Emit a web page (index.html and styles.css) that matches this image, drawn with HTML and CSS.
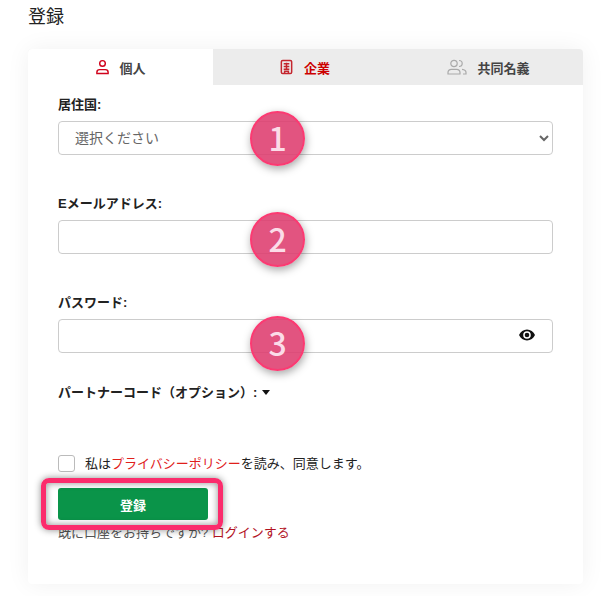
FILE: index.html
```html
<!DOCTYPE html>
<html lang="ja">
<head>
    <meta charset="UTF-8">
    <title>登録</title>
    <link rel="stylesheet" href="styles.css">
</head>
<body>
    <h1 class="page-title">登録</h1>

    <div class="card">
        <!-- tabs -->
        <div class="tabs">
            <div class="tab active">
                <svg class="tab-icon" viewBox="0 0 16 16" fill="none" stroke="#d0021b" stroke-width="1.5">
                    <circle cx="8" cy="4.2" r="3"/>
                    <path d="M2 15v-1.500c0-1.600 1.300-2.700 3-2.700h6c1.700 0 3 1.100 3 2.700V15z"/>
                </svg>
                <span>個人</span>
            </div>
            <div class="tab corp">
                <svg class="tab-icon" viewBox="0 0 16 16" fill="none" stroke="#c4262e" stroke-width="1.600">
                    <rect x="2.500" y="1" width="11" height="14" rx="1.500"/>
                    <path d="M5 4.500h6M5 7.500h6M5 10.500h6M8 3.500v7M6 15v-2.500h4V15"/>
                </svg>
                <span>企業</span>
            </div>
            <div class="tab joint">
                <svg class="tab-icon wide" viewBox="0 0 20 16" fill="none" stroke="#aaa" stroke-width="1.200">
                    <circle cx="7" cy="4.500" r="3.200"/>
                    <path d="M1 15v-1.500c0-2 1.500-3.200 3.500-3.200h5c2 0 3.500 1.200 3.500 3.200V15zM12 1.500c2 0 3.200 1.300 3.200 3s-1.200 3-3.200 3M15 10.300c2.200.2 4 1.300 4 3.200V15h-3"/>
                </svg>
                <span>共同名義</span>
            </div>
        </div>

        <!-- form -->
        <form class="form">
            <div class="field field-country">
                <label for="country">居住国:</label>
                <select id="country" class="input">
                    <option>選択ください</option>
                </select>
            </div>
            <div class="field field-email">
                <label for="email">Eメールアドレス:</label>
                <input type="text" id="email" class="input">
            </div>
            <div class="field field-password">
                <label for="password">パスワード:</label>
                <div class="password-box">
                    <input type="password" id="password" class="input">
                    <svg class="eye" viewBox="0 0 16 12">
                        <path fill="#111" fill-rule="evenodd" d="M8 .5C4.500.5 1.500 2.700 0 6c1.500 3.300 4.500 5.500 8 5.500s6.500-2.200 8-5.500C14.500 2.700 11.500.5 8 .5zM8 9.800A3.800 3.800 0 1 1 8 2.200a3.800 3.800 0 0 1 0 7.600z"/>
                        <circle cx="8" cy="6" r="2.300" fill="#111"/>
                    </svg>
                </div>
            </div>
            <div class="partner">パートナーコード（オプション）<span class="colon">:</span><span class="caret"></span></div>
            <div class="agree">
                <span class="checkbox"></span>
                <span>私は<a href="#" class="link-bright">プライバシーポリシー</a>を読み、同意します。</span>
            </div>
            <button type="button" class="submit-btn">登録</button>
            <p class="login-text">既に口座をお持ちですか? <a href="#">ログインする</a></p>
        </form>
    </div>

    <!-- annotations on top of the screenshot -->
    <div class="badge badge-1">1</div>
    <div class="badge badge-2">2</div>
    <div class="badge badge-3">3</div>
    <div class="highlight"></div>
</body>
</html>
```

FILE: styles.css
```css
body {
    margin: 0;
    background: #fff;
    font-family: "Liberation Sans", "Noto Sans CJK JP", sans-serif;
    color: #222;
    height: 596px;
    overflow: hidden;
    position: relative;
}

.page-title {
    margin: 0;
    padding: 7px 0 0 28px;
    height: 49px;
    box-sizing: border-box;
    font-size: 18px;
    line-height: 20px;
    font-weight: normal;
}

/* card */
.card {
    width: 555px;
    height: 535px;
    margin-left: 28px;
    background: #fff;
    border-radius: 4px;
    box-shadow: 0 0 24px rgba(0, 0, 0, 0.06);
    overflow: hidden;
}

.tabs {
    display: flex;
    height: 36px;
    background: #ececec;
}

.tab {
    display: flex;
    align-items: center;
    justify-content: center;
    gap: 10px;
    width: 185px;
    font-size: 13px;
    font-weight: bold;
    color: #444;
}

.tab.active {
    background: #fff;
    gap: 9px;
}

.tab.corp {
    color: #c00;
    padding-right: 2px;
    box-sizing: border-box;
}

.tab.joint {
    padding-right: 4px;
    box-sizing: border-box;
}

.tab-icon {
    width: 15px;
    height: 16px;
}

.tab-icon.wide {
    width: 20px;
}

/* form */
.form {
    padding: 0 30px;
}

.field label {
    display: block;
    font-size: 13px;
    line-height: 18px;
    font-weight: bold;
    color: #222;
    margin-bottom: 7px;
}

.field-country {
    padding-top: 11px;
}

.field-email {
    padding-top: 40px;
}

.field-password {
    padding-top: 40px;
}

.input {
    display: block;
    width: 100%;
    height: 34px;
    box-sizing: border-box;
    border: 1px solid #ccc;
    border-radius: 4px;
    background: #fff;
    outline: none;
    font-family: inherit;
}

select.input {
    padding-left: 12px;
    font-size: 14px;
    color: #666;
}

.password-box {
    position: relative;
}

.eye {
    position: absolute;
    right: 18px;
    top: 10px;
    width: 16px;
    height: 12px;
}

.partner {
    margin-top: 31px;
    font-size: 13px;
    line-height: 18px;
    font-weight: bold;
    color: #222;
}

.caret {
    display: inline-block;
    width: 0;
    height: 0;
    margin-left: 5px;
    vertical-align: 2px;
    border-left: 4.500px solid transparent;
    border-right: 4.500px solid transparent;
    border-top: 5px solid #111;
}

.agree {
    display: flex;
    align-items: center;
    gap: 10px;
    margin-top: 53px;
    font-size: 13px;
    line-height: 16px;
    color: #222;
}

.checkbox {
    width: 15px;
    height: 15px;
    border: 1px solid #bbb;
    border-radius: 3px;
}

.link-bright {
    color: #e0201b;
    text-decoration: none;
}

.submit-btn {
    display: block;
    width: 150px;
    height: 32px;
    margin-top: 16px;
    background: #0a9449;
    border: none;
    border-radius: 3px;
    color: #fff;
    font-family: inherit;
    font-size: 13px;
    font-weight: bold;
}

.login-text {
    margin: 4px 0 0;
    font-size: 13px;
    line-height: 18px;
    color: #555;
}

.login-text a {
    color: #b3131f;
    text-decoration: none;
}

/* annotations */
.badge {
    position: absolute;
    left: 250px;
    width: 55px;
    height: 55px;
    box-sizing: border-box;
    border: 2px solid #fb3a72;
    border-radius: 50%;
    background: rgba(222, 60, 110, 0.88);
    box-shadow: 1px 3px 8px rgba(0, 0, 0, 0.35);
    color: #fbdce8;
    font-family: "Noto Sans CJK JP", sans-serif;
    font-size: 32px;
    font-weight: 500;
    line-height: 48px;
    text-align: center;
}

.badge-1 { top: 111px; }
.badge-2 { top: 212px; }
.badge-3 { top: 316px; }

.highlight {
    position: absolute;
    left: 41px;
    top: 478px;
    width: 182px;
    height: 52px;
    box-sizing: border-box;
    border: 5px solid #fb2c6c;
    border-radius: 8px;
    box-shadow: 0 0 7px rgba(0, 0, 0, 0.45), inset 0 0 7px rgba(0, 0, 0, 0.45);
}
```
